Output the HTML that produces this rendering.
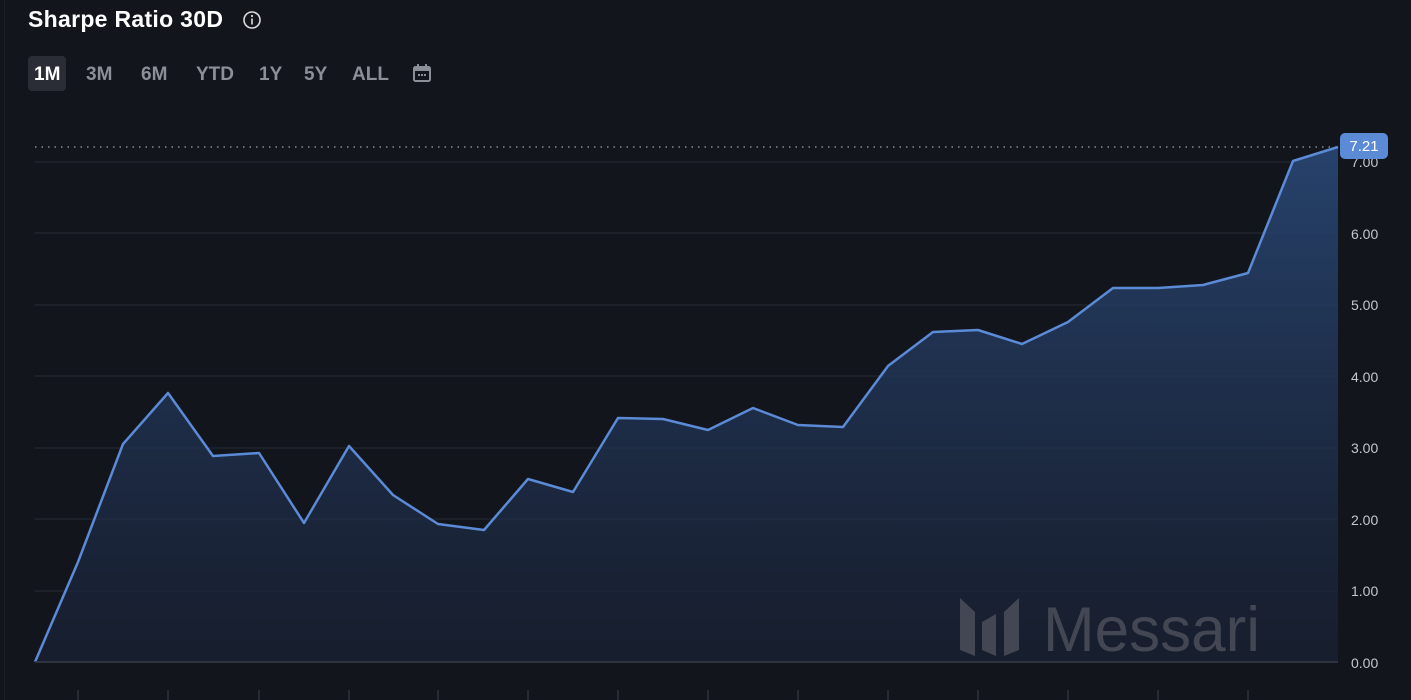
<!DOCTYPE html>
<html><head><style>
body{margin:0;width:1411px;height:700px;background:#12151c;overflow:hidden;font-family:"Liberation Sans",sans-serif;position:relative}
.t{position:absolute;left:28px;top:6px;color:#fff;font-weight:bold;font-size:23px;letter-spacing:0.3px}
.tb{position:absolute;top:56px;color:#8b8f98;font-weight:bold;font-size:19px;height:35px;line-height:37px}
.a{background:#2a2d35;color:#fff;border-radius:4px;padding:0 6px}
.ax{position:absolute;left:1351px;color:#c4c7cc;font-size:14px}
</style></head><body>
<div style="position:absolute;left:4px;top:0;width:1px;height:700px;background:#1c1f26"></div>
<div class="t">Sharpe Ratio 30D</div>
<svg style="position:absolute;left:242px;top:10px" width="20" height="20" viewBox="0 0 20 20"><circle cx="10" cy="10" r="8" fill="none" stroke="#ddd" stroke-width="1.6"/><rect x="9.2" y="8.5" width="1.6" height="6" fill="#ddd"/><circle cx="10" cy="6" r="1.1" fill="#ddd"/></svg>
<div class="tb a" style="left:28px">1M</div>
<div class="tb" style="left:86px">3M</div>
<div class="tb" style="left:141px">6M</div>
<div class="tb" style="left:196px">YTD</div>
<div class="tb" style="left:259px">1Y</div>
<div class="tb" style="left:304px">5Y</div>
<div class="tb" style="left:352px">ALL</div>
<svg style="position:absolute;left:412px;top:63px" width="20" height="20" viewBox="0 0 20 20"><rect x="2" y="4" width="16" height="14" rx="1.5" fill="none" stroke="#8b8f98" stroke-width="2"/><rect x="2" y="4" width="16" height="4" fill="#8b8f98"/><rect x="5" y="1" width="2" height="4" fill="#8b8f98"/><rect x="13" y="1" width="2" height="4" fill="#8b8f98"/><rect x="6" y="11" width="2" height="2" fill="#8b8f98"/><rect x="9" y="11" width="2" height="2" fill="#8b8f98"/><rect x="12" y="11" width="2" height="2" fill="#8b8f98"/></svg>
<svg style="position:absolute;left:0;top:0" width="1411" height="700">
<defs><linearGradient id="g" x1="0" y1="0" x2="0" y2="1"><stop offset="0" stop-color="#2a4a7a" stop-opacity="0.85"/><stop offset="1" stop-color="#1a2338" stop-opacity="0.6"/></linearGradient></defs>
<g stroke="#262a33" stroke-width="1">
<line x1="35" x2="1338" y1="162" y2="162"/><line x1="35" x2="1338" y1="233" y2="233"/><line x1="35" x2="1338" y1="305" y2="305"/><line x1="35" x2="1338" y1="376" y2="376"/><line x1="35" x2="1338" y1="448" y2="448"/><line x1="35" x2="1338" y1="519" y2="519"/><line x1="35" x2="1338" y1="591" y2="591"/>
</g>
<line x1="35" x2="1338" y1="147" y2="147" stroke="#9aa0aa" stroke-width="1.2" stroke-dasharray="1.5 5"/>
<polygon fill="url(#g)" points="35,662 78,562 123,444 168,393 213,456 259,453 304,523 349,446 393,495 438,524 484,530 528,479 573,492 618,418 663,419 708,430 753,408 798,425 843,427 888,366 933,332 978,330 1022,344 1068,322 1113,288 1158,288 1203,285 1248,273 1293,161 1338,147 1338,662"/>
<text x="1043" y="651" font-family="Liberation Sans,sans-serif" font-size="63" fill="#4a4f59" fill-opacity="0.85" textLength="217" lengthAdjust="spacingAndGlyphs">Messari</text>
<g fill="#4a4f59" fill-opacity="0.85"><polygon points="960,598 975,612 975,656 960,650"/><polygon points="982,622 996,614 996,656 982,650"/><polygon points="1004,612 1019,598 1019,650 1004,656"/></g>
<polyline fill="none" stroke="#5b8ad6" stroke-width="2.5" stroke-linejoin="round" points="35,662 78,562 123,444 168,393 213,456 259,453 304,523 349,446 393,495 438,524 484,530 528,479 573,492 618,418 663,419 708,430 753,408 798,425 843,427 888,366 933,332 978,330 1022,344 1068,322 1113,288 1158,288 1203,285 1248,273 1293,161 1338,147"/>
<line x1="35" x2="1338" y1="662" y2="662" stroke="#2e3340" stroke-width="2"/>
<g stroke="#3a3e47" stroke-width="1"><line x1="78" x2="78" y1="690" y2="700"/><line x1="168" x2="168" y1="690" y2="700"/><line x1="259" x2="259" y1="690" y2="700"/><line x1="349" x2="349" y1="690" y2="700"/><line x1="438" x2="438" y1="690" y2="700"/><line x1="528" x2="528" y1="690" y2="700"/><line x1="618" x2="618" y1="690" y2="700"/><line x1="708" x2="708" y1="690" y2="700"/><line x1="798" x2="798" y1="690" y2="700"/><line x1="888" x2="888" y1="690" y2="700"/><line x1="978" x2="978" y1="690" y2="700"/><line x1="1068" x2="1068" y1="690" y2="700"/><line x1="1158" x2="1158" y1="690" y2="700"/><line x1="1248" x2="1248" y1="690" y2="700"/></g>
</svg>
<div class="ax" style="top:154px">7.00</div>
<div class="ax" style="top:226px">6.00</div>
<div class="ax" style="top:297px">5.00</div>
<div class="ax" style="top:369px">4.00</div>
<div class="ax" style="top:440px">3.00</div>
<div class="ax" style="top:512px">2.00</div>
<div class="ax" style="top:583px">1.00</div>
<div class="ax" style="top:655px">0.00</div>
<div style="position:absolute;left:1340px;top:133px;width:48px;height:26px;background:#5b8ad6;border-radius:5px;color:#fff;font-size:15px;line-height:27px;text-align:center">7.21</div>
</body></html>
